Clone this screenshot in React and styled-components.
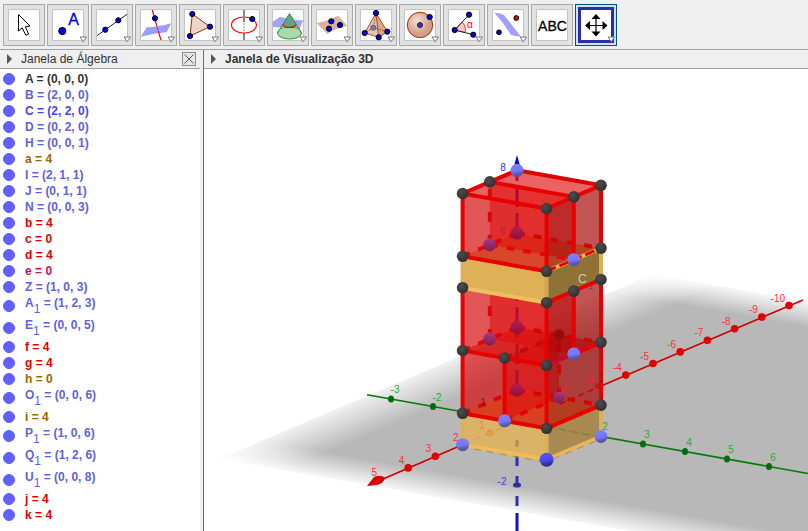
import React, { useState } from 'react';
import styled, { createGlobalStyle } from 'styled-components';

const GlobalStyle = createGlobalStyle`
  * {
    box-sizing: border-box;
  }

  body {
    margin: 0;
    background: #efefef;
    font-family: "Liberation Sans", Arial, sans-serif;
    font-size: 12px;
  }
`

const Page = styled.div`
  display: flex;
  flex-direction: column;
  height: 100vh;
`

const Toolbar = styled.div`
  display: flex;
  flex: none;
  gap: 2px;
  padding: 4px 3px 3px;
  border-bottom: 1px solid #a0a0a0;
`

const ToolButton = styled.button`
  display: flex;
  align-items: center;
  justify-content: center;
  width: 42px;
  height: 42px;
  padding: 0;
  border: 1px solid ${props => props.$active ? '#00508c' : '#a9a9a9'};
  background: ${props => props.$active ? '#cde4f8' : '#e1e1e1'};
`

const ToolFrame = styled.span`
  display: block;
  width: 32px;
  height: 32px;
  background: #fff;
  box-shadow: ${props => props.$active ? '0 0 0 2px #2b2eaa, inset 0 0 0 1px #2b2eaa' : 'inset 0 0 0 1px #c4c4c4'};
`

const ToolIcon = styled.svg`
  display: block;
  width: 32px;
  height: 32px;
  overflow: visible;
`

const Workspace = styled.main`
  display: flex;
  flex: 1;
  min-height: 0;
`

const AlgebraPanel = styled.section`
  display: flex;
  flex-direction: column;
  flex: none;
  width: 200px;
  background: #fff;
  overflow: hidden;
`

const Splitter = styled.div`
  flex: none;
  width: 4px;
  background: #efefef;
  border-right: 1px solid #707070;
`

const ViewPanel = styled.section`
  display: flex;
  flex-direction: column;
  flex: 1;
  min-width: 0;
  background: #fff;
`

const PanelHeader = styled.header`
  display: flex;
  align-items: center;
  flex: none;
  gap: 9px;
  height: 19px;
  padding: 0 4px 0 7px;
  border-bottom: 1px solid #a0a0a0;
  background: #efefef;
`

const PanelTitle = styled.h2`
  flex: 1;
  margin: 0;
  color: #333;
  font-size: 12px;
  font-weight: ${props => props.$strong ? 'bold' : 'normal'};
  line-height: 18px;
`

const Expander = styled.span`
  border-left: 5px solid #555;
  border-top: 5px solid transparent;
  border-bottom: 5px solid transparent;
`

const CloseButton = styled.button`
  display: flex;
  padding: 0;
  width: 14px;
  height: 14px;
  border: 1px solid #8c8c8c;
  background: #e6e6e6;
`

const ObjectList = styled.ul`
  margin: 0;
  padding: 2px 0 0 3px;
  list-style: none;
`

const ObjectRow = styled.li`
  display: flex;
  align-items: center;
  height: ${props => props.$tall ? 22 : 16}px;
`

const Marble = styled.input`
  appearance: none;
  flex: none;
  width: 12px;
  height: 12px;
  margin: 0 10px 0 0;
  border: 1px solid #6060ff;
  border-radius: 50%;
  background: #fff;

  &:checked {
    background: #6060ff;
  }
`

const ObjectLabel = styled.label`
  align-self: flex-start;
  color: ${props => props.$color};
  font-weight: bold;
  line-height: 17px;

  sub {
    font-size: 12px;
    font-weight: normal;
    line-height: 0;
    vertical-align: -6px;
  }
`

const Canvas = styled.svg`
  display: block;
  flex: 1;
  width: 100%;
  min-height: 0;
`

const AxisLabel = styled.text`
  fill: ${props => props.$color};
  font-size: 10px;
  text-anchor: ${props => props.$end ? 'end' : 'middle'};
`

const POINT = '#6161dd';
const RED = '#e10000';
const BROWN = '#996600';

const objects = [
  { name: 'A', value: '(0, 0, 0)', color: '#333' },
  { name: 'B', value: '(2, 0, 0)', color: POINT },
  { name: 'C', value: '(2, 2, 0)', color: '#4444f0' },
  { name: 'D', value: '(0, 2, 0)', color: POINT },
  { name: 'H', value: '(0, 0, 1)', color: POINT },
  { name: 'a', value: '4', color: BROWN },
  { name: 'I', value: '(2, 1, 1)', color: POINT },
  { name: 'J', value: '(0, 1, 1)', color: POINT },
  { name: 'N', value: '(0, 0, 3)', color: POINT },
  { name: 'b', value: '4', color: RED },
  { name: 'c', value: '0', color: RED },
  { name: 'd', value: '4', color: RED },
  { name: 'e', value: '0', color: '#cc1155' },
  { name: 'Z', value: '(1, 0, 3)', color: POINT },
  { name: 'A', sub: '1', value: '(1, 2, 3)', color: POINT },
  { name: 'E', sub: '1', value: '(0, 0, 5)', color: POINT },
  { name: 'f', value: '4', color: RED },
  { name: 'g', value: '4', color: RED },
  { name: 'h', value: '0', color: BROWN },
  { name: 'O', sub: '1', value: '(0, 0, 6)', color: POINT },
  { name: 'i', value: '4', color: BROWN },
  { name: 'P', sub: '1', value: '(1, 0, 6)', color: POINT },
  { name: 'Q', sub: '1', value: '(1, 2, 6)', color: POINT },
  { name: 'U', sub: '1', value: '(0, 0, 8)', color: POINT },
  { name: 'j', value: '4', color: RED },
  { name: 'k', value: '4', color: RED },
];

const Dot = ({ x, y, r = 2.6, fill = '#0000e0' }) => (
  <circle cx={x} cy={y} r={r} fill={fill} stroke="#000" strokeWidth="1" />
)

const tools = [
  { label: 'Mover', single: true, icon: (
    <path d="M10.5 5.5V22L14.2 18.8L17.8 26.2L20.6 25L17.4 17.8L22 17Z" fill="#fff" stroke="#000" />
  ) },
  { label: 'Ponto', icon: (
    <>
      <Dot x={10.3} y={22} r={3.6} />
      <text x="21.5" y="16" textAnchor="middle" fontSize="16" stroke="#0000e0" strokeWidth="0.3" fill="#0000e0">A</text>
    </>
  ) },
  { label: 'Reta', icon: (
    <>
      <path d="M1 26.7L31 5.3" stroke="#222" />
      <Dot x={9.3} y={20.7} />
      <Dot x={22.3} y={11.3} />
    </>
  ) },
  { label: 'Reta perpendicular', icon: (
    <>
      <path d="M6.7 18.3Q18 18 31 14.3L26.7 23.3Q14 24 .7 27.7Z" fill="#9c9cff" />
      <path d="M12.3 1L16.5 16" stroke="#f00" strokeWidth="1.2" />
      <path d="M16.5 16L18.5 23" stroke="#f00" strokeDasharray="2 1" />
      <path d="M18.5 23L21 31" stroke="#f00" strokeWidth="1.2" />
      <Dot x={15} y={9.3} />
    </>
  ) },
  { label: 'Polígono', icon: (
    <>
      <path d="M8.3 5L26 17.7L6 27Z" fill="#ecd6c9" stroke="#993300" />
      <Dot x={8.3} y={5} />
      <Dot x={26} y={17.7} />
      <Dot x={6} y={27} />
    </>
  ) },
  { label: 'Círculo', icon: (
    <>
      <path d="M16 24V31" stroke="#888" strokeWidth="2" />
      <path d="M16 14V23" stroke="#888" strokeWidth="1" strokeDasharray="2 1" />
      <ellipse cx="16" cy="16" rx="12.5" ry="8" fill="none" stroke="#f00" strokeWidth="1.2" />
      <path d="M16 1V13" stroke="#888" strokeWidth="2" />
      <Dot x={24.3} y={10} />
    </>
  ) },
  { label: 'Interseção', icon: (
    <>
      <path d="M.7 12.7L8 7.7Q20 12 31.3 11L27.3 20.5Q14 18 .7 18Z" fill="#a3a3ff" />
      <path d="M17.5 4.5L5.5 24A12 6 0 0 0 29.5 24Z" fill="#9ed29e" fillOpacity="0.85" />
      <path d="M17.5 4.5L11 15.5A6.5 3 0 0 0 24 15.5Z" fill="#4d8f7a" fillOpacity="0.7" />
      <path d="M17.5 4.5L5.5 24A12 6 0 0 0 29.5 24Z" fill="none" stroke="#229922" />
      <path d="M5.500 24A12 6 0 0 1 29.5 24" fill="none" stroke="#229922" strokeWidth="0.8" strokeDasharray="2 1" />
      <path d="M11 15.5A6.5 3 0 0 0 24 15.5" fill="none" stroke="#e00" strokeWidth="1.2" />
    </>
  ) },
  { label: 'Plano por três pontos', icon: (
    <>
      <path d="M.7 14.3Q12 12 22.3 6.7L31.3 16.7Q20 19 11.3 25Z" fill="#d9b3a0" />
      <Dot x={15.3} y={12.3} />
      <Dot x={24} y={16} />
      <Dot x={13} y={19.7} />
    </>
  ) },
  { label: 'Pirâmide', icon: (
    <>
      <path d="M16 4L4.7 24L18.7 28.3L27.3 22.7Z" fill="#e2c4b2" />
      <path d="M16 4L18.7 28.3L27.3 22.7Z" fill="#d4a88c" />
      <path d="M16 4L4.7 24L18.7 28.3L27.3 22.7ZL18.7 28.3" fill="none" stroke="#993300" strokeWidth="0.8" />
      <path d="M16 4L13.3 18.7L4.7 24M13.3 18.7L27.3 22.7" fill="none" stroke="#993300" strokeWidth="0.8" strokeDasharray="2 1" />
      <circle cx="13.3" cy="18.7" r="2.5" fill="#8877aa" stroke="#665577" />
      <Dot x={16} y={4} />
      <Dot x={4.7} y={24} />
      <Dot x={18.7} y={28.3} />
      <Dot x={27.3} y={22.7} />
    </>
  ) },
  { label: 'Esfera', icon: (
    <>
      <circle cx="16" cy="16" r="12.7" fill="url(#ball)" stroke="#993300" />
      <circle cx="16" cy="16" r="2.5" fill="#4a2fa0" stroke="#221a55" />
      <Dot x={25.7} y={8} />
    </>
  ) },
  { label: 'Ângulo', icon: (
    <>
      <path d="M6.7 21L14 13.2A10.5 10.5 0 0 1 17 23.6Z" fill="#ffc8c8" stroke="#f00" strokeWidth="0.8" />
      <path d="M21 5.7L6.7 21L25.3 25.7" fill="none" stroke="#222" />
      <text x="22" y="19" textAnchor="middle" fontSize="10" fill="#f00">α</text>
      <Dot x={21} y={5.7} />
      <Dot x={6.7} y={21} />
      <Dot x={25.3} y={25.7} />
    </>
  ) },
  { label: 'Reflexão por um plano', icon: (
    <>
      <path d="M2.3 3.7Q7 3.5 12 6L29 27.7Q23 27 18.7 25.7Q12 14 2.3 3.7Z" fill="#a0a0ff" />
      <Dot x={24.3} y={9} fill="#e00" r={2.4} />
      <Dot x={7} y={23.3} r={2.4} />
    </>
  ) },
  { label: 'Texto', single: true, icon: (
    <text x="16.5" y="21.5" textAnchor="middle" fontSize="14" stroke="#000" strokeWidth="0.3">ABC</text>
  ) },
  { label: 'Girar janela de visualização 3D', icon: (
    <>
      <path d="M16 8V24M8 16.5H24" stroke="#000" strokeWidth="1.2" />
      <path d="M16 5L20.5 10H11.5ZM16 27.5L20.5 22.5H11.5ZM5 16.5L10 12V21ZM27.5 16.5L22.5 12V21Z" />
    </>
  ) },
];

// World coordinates to canvas coordinates
const project = ([x, y, z]) => [
  517 - 27.2 * x + 42 * y,
  421.5 + 11.6 * x + 7.5 * y - 31.4 * z,
];

const toPath = (...points) => 'M' + points.map(p => project(p).join(' ')).join('L');

const Face = ({ points, fill, opacity = 0.44 }) => (
  <path d={toPath(...points) + 'Z'} fill={fill} fillOpacity={opacity} />
)

const Edge = ({ from, to, color = '#e80000', dash, width = 4, opacity }) => (
  <path
    d={toPath(from, to)}
    stroke={color}
    strokeWidth={width}
    strokeDasharray={dash}
    strokeLinecap={dash ? 'butt' : 'round'}
    strokeOpacity={opacity}
    fill="none"
  />
)

const Ball = ({ at, kind = 'dark', r = 5.8 }) => {
  const [cx, cy] = project(at);
  return <circle cx={cx} cy={cy} r={r} fill={'url(#' + kind + ')'} />;
}

const HIDDEN = '8 9';
const UPRIGHT = '10 13';

// Glass box standing on z0, cut in two halves along the given axis
const GlassBox = ({ z0, z1, split }) => {
  const wall = split === 'x'
    ? [[1, 0, z0], [1, 2, z0], [1, 2, z1], [1, 0, z1]]
    : [[2, 1, z0], [0, 1, z0], [0, 1, z1], [2, 1, z1]];
  return (
    <g>
      <Face points={[[0, 0, z0], [2, 0, z0], [2, 2, z0], [0, 2, z0]]} fill="#c80000" opacity={0.35} />
      <Face points={[[0, 0, z0], [2, 0, z0], [2, 0, z1], [0, 0, z1]]} fill="#c40000" />
      <Face points={[[0, 0, z0], [0, 2, z0], [0, 2, z1], [0, 0, z1]]} fill="#d80000" />
      <Face points={wall} fill="#e00000" opacity={0.5} />
      <Edge from={[0, 0, z0]} to={[0, 0, z1]} color="#80004c" width={3} dash="20 6" opacity={0.8} />
      <Face points={[[2, 0, z0], [2, 2, z0], [2, 2, z1], [2, 0, z1]]} fill="#dc1010" />
      <Face points={[[2, 2, z0], [0, 2, z0], [0, 2, z1], [2, 2, z1]]} fill="#8c0a0a" />
      <Face points={[[0, 0, z1], [2, 0, z1], [2, 2, z1], [0, 2, z1]]} fill="#e60000" opacity={0.3} />
      <Edge from={[2, 0, z0]} to={[0, 0, z0]} dash={HIDDEN} color="#dc0000" opacity={0.9} />
      <Edge from={[0, 0, z0]} to={[0, 2, z0]} dash={HIDDEN} color="#d40000" opacity={0.9} />
    </g>
  );
}

const Axes = () => (
  <g>
    <path d="M367 394.7L517 421.5L808 473.5" stroke="#007a00" strokeWidth="1.6" fill="none" />
    <path d="M376 482L462 445M601 386L803 300" stroke="#cc0000" strokeWidth="1.6" />
    <path d="M367 486L374 477Q381 474 385 478Q384 483 377 485Z" fill="#e00000" />
    {[3, 4, -4, -5, -6, -7, -8, -9, -10].map(n => {
      const [x, y] = project([n, 0, 0]);
      return <circle key={n} cx={x} cy={y} r="3.8" fill="#e00000" />;
    })}
    {[-3, -2, 3, 4, 5, 6].map(n => {
      const [x, y] = project([0, n, 0]);
      return <ellipse key={n} cx={x} cy={y} rx="3" ry="3.6" fill="#006b10" />;
    })}
    {[2, 3, 4, 5, -4, -5, -6, -7, -8, -9, -10].map(n => {
      const [x, y] = project([n, 0, 0]);
      return <AxisLabel key={n} x={x - 4} y={y - 4} $end $color="#ff3030">{n}</AxisLabel>;
    })}
    {[-3, -2, 3, 4, 5, 6].map(n => {
      const [x, y] = project([0, n, 0]);
      return <AxisLabel key={n} x={x + 4} y={y - 6} $color="#20b030">{n}</AxisLabel>;
    })}
  </g>
)

const Scene = () => (
  <Canvas viewBox="204 69 604 462" preserveAspectRatio="xMinYMin slice" role="img" aria-label="Janela de Visualização 3D">
    <defs>
      <linearGradient id="fadeX">
        <stop offset="0" stopColor="#b8b8b8" stopOpacity="0.1" />
        <stop offset="0.1" stopColor="#b8b8b8" />
        <stop offset="0.9" stopColor="#b8b8b8" />
        <stop offset="1" stopColor="#b8b8b8" stopOpacity="0.1" />
      </linearGradient>
      <linearGradient id="fadeY" x2="0" y2="1">
        <stop offset="0" stopColor="#333" />
        <stop offset="0.1" stopColor="#fff" />
        <stop offset="0.9" stopColor="#fff" />
        <stop offset="1" stopColor="#333" />
      </linearGradient>
      <mask id="floorMask" maskUnits="userSpaceOnUse" x="0" y="0" width="1" height="1">
        <rect width="1" height="1" fill="url(#fadeY)" />
      </mask>
      <radialGradient id="dark" cx="0.4" cy="0.35" r="0.65">
        <stop offset="0" stopColor="#4c4c4c" />
        <stop offset="1" stopColor="#303030" />
      </radialGradient>
      <linearGradient id="blue" x1="0.4" x2="0.6" y2="1">
        <stop offset="0" stopColor="#8080ff" />
        <stop offset="0.55" stopColor="#7676f4" />
        <stop offset="0.75" stopColor="#5c5cb4" />
        <stop offset="1" stopColor="#50509c" />
      </linearGradient>
      <linearGradient id="strong" x1="0.4" x2="0.6" y2="1">
        <stop offset="0" stopColor="#5454ff" />
        <stop offset="0.55" stopColor="#4848f0" />
        <stop offset="0.75" stopColor="#3434a4" />
        <stop offset="1" stopColor="#2c2c90" />
      </linearGradient>
      <linearGradient id="tinted" x2="0" y2="1">
        <stop offset="0" stopColor="#b42050" />
        <stop offset="1" stopColor="#960c38" />
      </linearGradient>
      <linearGradient id="violet" x2="0" y2="1">
        <stop offset="0" stopColor="#a43c84" />
        <stop offset="1" stopColor="#801c54" />
      </linearGradient>
      <radialGradient id="shaded">
        <stop offset="0" stopColor="#8c0a0a" />
        <stop offset="1" stopColor="#a00c0c" />
      </radialGradient>
    </defs>

    <g transform="matrix(435 -185 672 118 218 459)">
      <rect width="1" height="1" fill="url(#fadeX)" mask="url(#floorMask)" />
    </g>

    <Axes />
    <path d="M517 456V466M517 476V485M517 496V506" stroke="#3030a8" strokeWidth="3" />
    <path d="M517 513V531" stroke="#1010d0" strokeWidth="3" />
    <ellipse cx="517" cy="485" rx="4" ry="2.6" fill="#2e2ea0" />
    <AxisLabel x="502" y="485" $color="#4040c8">-2</AxisLabel>

    {/* base slab */}
    <g>
      <Face points={[[2, 0, 0], [2, 2, 0], [2, 2, 1], [2, 0, 1]]} fill="#dcb25e" opacity={0.92} />
      <Face points={[[2, 2, 0], [0, 2, 0], [0, 2, 1], [2, 2, 1]]} fill="#a8874a" opacity={0.95} />
      <Face points={[[0, 0, 1], [2, 0, 1], [2, 2, 1], [0, 2, 1]]} fill="#dc9a48" opacity={0.95} />
      <path d="M517 440V447" stroke="#b08c58" strokeWidth="3" />
      <circle cx="490" cy="433" r="2.5" fill="none" stroke="#e09848" strokeWidth="2" />
      <AxisLabel x="482" y="429" $color="#e08850">1</AxisLabel>
      <path d={toPath([2, 0, 0], [0, 0, 0])} stroke="#e09838" strokeWidth="1.5" strokeDasharray="7 5" strokeOpacity="0.6" />
      <path d="M559 429L598 437" stroke="#88803c" strokeWidth="1.6" strokeDasharray="7 5" />
      <Edge from={[2, 0, 0]} to={[2, 2, 0]} color="#efbc5a" />
      <Edge from={[2, 2, 0]} to={[0, 2, 0]} color="#e8b658" />
      <path d="M474 449L545 462M553 459L596 441" fill="none" stroke="#b08a48" strokeDasharray="7 6" />
      <Edge from={[2, 0, 0]} to={[2, 0, 1]} color="#e0b058" />
      <Edge from={[2, 2, 0]} to={[2, 2, 1]} color="#dcb058" />
      <Edge from={[0, 2, 0]} to={[0, 2, 1]} color="#dcb058" />
    </g>

    <GlassBox z0={1} z1={3} split="y" />
    <path d="M560 404L601 386" stroke="#d00000" strokeWidth="1.6" strokeDasharray="6 4" />
    <circle cx="598" cy="386" r="3" fill="#c01818" />
    <AxisLabel x="589" y="383" $color="#f02828">-3</AxisLabel>
    <AxisLabel x="564" y="393" $color="#f02828">2</AxisLabel>
    <AxisLabel x="537" y="404" $color="#d82020">1</AxisLabel>
    <AxisLabel x="483" y="406" $color="#702010">1</AxisLabel>
    <AxisLabel x="605" y="430" $color="#20b030">2</AxisLabel>
    <Edge from={[0, 1, 1]} to={[0, 1, 3]} dash={UPRIGHT} color="#c80808" />
    <Edge from={[2, 1, 1]} to={[0, 1, 1]} dash={HIDDEN} />
    <Ball at={[0, 0, 1]} kind="tinted" r={6.5} />
    <Ball at={[0, 1, 1]} kind="violet" />

    <GlassBox z0={3} z1={5} split="x" />
    <Edge from={[2, 1, 3]} to={[0, 1, 3]} dash={HIDDEN} color="#c80808" />
    <Edge from={[1, 0, 3]} to={[1, 0, 5]} dash={UPRIGHT} color="#d80808" />
    <Ball at={[0, 0, 3]} kind="tinted" r={6.5} />
    <Ball at={[1, 0, 3]} kind="violet" r={6.5} />
    <Ball at={[0, 1, 3]} kind="shaded" />

    {/* middle slab */}
    <g>
      <Face points={[[0, 0, 6], [2, 0, 6], [2, 2, 6], [0, 2, 6]]} fill="#dcb060" opacity={1} />
      <Face points={[[2, 0, 5], [2, 2, 5], [2, 2, 6], [2, 0, 6]]} fill="#dfb156" opacity={1} />
      <Face points={[[2, 2, 5], [0, 2, 5], [0, 2, 6], [2, 2, 6]]} fill="#907236" opacity={1} />
      <Edge from={[2, 0, 5]} to={[2, 0, 6]} color="#e0b058" />
      <Edge from={[2, 2, 5]} to={[2, 2, 6]} color="#d0a450" />
      <Edge from={[0, 2, 5]} to={[0, 2, 6]} color="#dcb058" />
      <text x="578" y="283" fontSize="12" fill="#c4ccc8">C</text>
      <text x="588" y="289" fontSize="9" fill="#3c5868">1</text>
    </g>

    <GlassBox z0={6} z1={8} split="x" />
    <Edge from={[1, 0, 6]} to={[1, 0, 8]} dash={UPRIGHT} color="#d80808" />
    <Edge from={[1, 0, 6]} to={[1, 2, 6]} dash={HIDDEN} color="#e00808" />
    <Ball at={[0, 0, 6]} kind="tinted" r={6.5} />
    <Ball at={[1, 0, 6]} kind="violet" r={6.5} />
    <AxisLabel x="503" y="234" $color="#c01c30">6</AxisLabel>

    {/* front edges of the tower */}
    {[[1, 3], [3, 5], [6, 8]].map(([a, b]) => (
      <g key={a}>
        <Edge from={[2, 0, a]} to={[2, 0, b]} />
        <Edge from={[2, 2, a]} to={[2, 2, b]} />
        <Edge from={[0, 2, a]} to={[0, 2, b]} />
        <Edge from={[0, 2, a]} to={[0, 2, b]} dash={UPRIGHT} color="#b81010" width={2} />
        <Edge from={[2, 0, a]} to={[2, 2, a]} />
      </g>
    ))}
    <Edge from={[2, 1, 1]} to={[2, 1, 3]} />
    <Edge from={[1, 2, 3]} to={[1, 2, 5]} />
    <Edge from={[1, 2, 6]} to={[1, 2, 8]} />
    <Edge from={[2, 2, 1]} to={[0, 2, 1]} />
    <Edge from={[2, 2, 3]} to={[1, 2, 3]} color="#c80830" />
    <Edge from={[1, 2, 3]} to={[0, 2, 3]} />
    <Edge from={[2, 0, 5]} to={[2, 2, 5]} color="#f0c060" />
    <Edge from={[2, 2, 5]} to={[0, 2, 5]} />
    <Edge from={[2, 2, 6]} to={[0, 2, 6]} color="#e8b850" />
    <Edge from={[2, 2, 6]} to={[0, 2, 6]} dash="10 4" width={3} />
    <Edge from={[2, 0, 8]} to={[2, 2, 8]} />
    <Edge from={[2, 2, 8]} to={[0, 2, 8]} />
    <Edge from={[0, 2, 8]} to={[0, 0, 8]} />
    <Edge from={[0, 2, 8]} to={[0, 0, 8]} dash={HIDDEN} color="#c01010" width={2} />
    <Edge from={[0, 0, 8]} to={[2, 0, 8]} />
    <Edge from={[1, 0, 8]} to={[1, 2, 8]} />

    {[1, 3, 5, 6, 8].map(z => (
      <g key={z}>
        <Ball at={[2, 0, z]} />
        <Ball at={[2, 2, z]} />
        <Ball at={[0, 2, z]} />
      </g>
    ))}
    <Ball at={[2, 1, 3]} />
    <Ball at={[1, 2, 5]} />
    <Ball at={[1, 0, 8]} />
    <Ball at={[1, 2, 8]} />
    <Ball at={[2, 0, 0]} kind="blue" r={6.5} />
    <Ball at={[0, 2, 0]} kind="blue" r={6.5} />
    <Ball at={[2, 2, 0]} kind="strong" r={7} />
    <Ball at={[2, 1, 1]} kind="blue" r={6.5} />
    <Ball at={[1, 2, 3]} kind="blue" r={6.5} />
    <Ball at={[1, 2, 6]} kind="blue" r={6.5} />
    <path d="M517 155L520 166H514Z" fill="#0000e0" />
    <Ball at={[0, 0, 8]} kind="blue" r={6.5} />
    <AxisLabel x="503" y="171" $color="#3030e0">8</AxisLabel>
  </Canvas>
)

const Tool = ({ tool, active, onClick }) => (
  <ToolButton type="button" aria-label={tool.label} aria-pressed={active} $active={active} onClick={onClick}>
    <ToolFrame $active={active}>
      <ToolIcon viewBox="0 0 32 32" fill="#000">
        {tool.label === 'Esfera' &&
          <defs>
            <radialGradient id="ball" cx="0.4" cy="0.35">
              <stop offset="0" stopColor="#f3e2d8" />
              <stop offset="1" stopColor="#d0a088" />
            </radialGradient>
          </defs>
        }
        {tool.icon}
        {!tool.single && <path d="M28 28H34.5L31.2 32.8Z" fill="#fff" stroke="#777" />}
      </ToolIcon>
    </ToolFrame>
  </ToolButton>
)

const App = () => {
  const [active, setActive] = useState(tools.length - 1);

  return (
    <Page>
      <GlobalStyle />
      <Toolbar role="toolbar">
        {tools.map((tool, i) => (
          <Tool key={tool.label} tool={tool} active={i === active} onClick={() => setActive(i)} />
        ))}
      </Toolbar>
      <Workspace>
        <AlgebraPanel>
          <PanelHeader>
            <Expander />
            <PanelTitle>Janela de Álgebra</PanelTitle>
            <CloseButton type="button" aria-label="Fechar">
              <svg width="12" height="12" viewBox="0 0 12 12">
                <path d="M1.5 1.5L10.5 10.5M10.5 1.5L1.5 10.5" stroke="#555" />
              </svg>
            </CloseButton>
          </PanelHeader>
          <ObjectList>
            {objects.map((item, i) => (
              <ObjectRow key={i} $tall={!!item.sub}>
                <Marble type="checkbox" id={'object-' + i} defaultChecked />
                <ObjectLabel htmlFor={'object-' + i} $color={item.color}>
                  {item.name}{item.sub && <sub>{item.sub}</sub>} = {item.value}
                </ObjectLabel>
              </ObjectRow>
            ))}
          </ObjectList>
        </AlgebraPanel>
        <Splitter />
        <ViewPanel>
          <PanelHeader>
            <Expander />
            <PanelTitle $strong>Janela de Visualização 3D</PanelTitle>
          </PanelHeader>
          <Scene />
        </ViewPanel>
      </Workspace>
    </Page>
  );
}

export default App;
